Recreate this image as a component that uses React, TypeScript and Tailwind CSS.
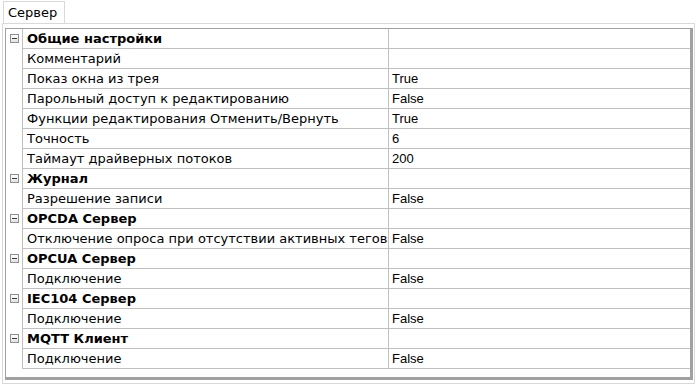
import React from 'react';

type Row = { name: string; value?: string; group?: boolean };

const rows: Row[] = [
  { name: 'Общие настройки', group: true },
  { name: 'Комментарий', value: '' },
  { name: 'Показ окна из трея', value: 'True' },
  { name: 'Парольный доступ к редактированию', value: 'False' },
  { name: 'Функции редактирования Отменить/Вернуть', value: 'True' },
  { name: 'Точность', value: '6' },
  { name: 'Таймаут драйверных потоков', value: '200' },
  { name: 'Журнал', group: true },
  { name: 'Разрешение записи', value: 'False' },
  { name: 'OPCDA Сервер', group: true },
  { name: 'Отключение опроса при отсутствии активных тегов', value: 'False' },
  { name: 'OPCUA Сервер', group: true },
  { name: 'Подключение', value: 'False' },
  { name: 'IEC104 Сервер', group: true },
  { name: 'Подключение', value: 'False' },
  { name: 'MQTT Клиент', group: true },
  { name: 'Подключение', value: 'False' },
];

const MinusBox = () => (
  <div className="mt-[5px] ml-[4px] w-[9px] h-[9px] border border-[#919191] bg-gradient-to-b from-white to-[#e2e2e2] flex items-center justify-center">
    <div className="w-[5px] h-px bg-[#3c3c3c]" />
  </div>
);

export default function App() {
  return (
    <div className="w-[696px] h-[385px] bg-white text-black overflow-hidden">
      {/* tabs */}
      <div className="h-[23px] flex items-end pl-[3px]">
        <div className="h-[22px] w-[62px] border border-b-0 border-[#d9d9d9] bg-white flex items-center pl-[4px] pt-[1px] text-[13px] font-['DejaVu_Sans',sans-serif]">
          Сервер
        </div>
      </div>
      {/* panel */}
      <div className="ml-[2px] w-[693px] h-[361px] border border-[#d9d9d9] pt-[4px] pl-[2px]">
        <div className="w-[688px] h-[352px] border-l border-t border-[#a0a0a0] border-r-[3px] border-b-[3px] border-r-[#a0a0a0] border-b-[#a0a0a0] bg-white">
          {rows.map((r, i) => (
            <div key={i} className="flex h-[20px]">
              <div className="w-[17px] shrink-0 border-r border-[#c0c0c0]">{r.group && <MinusBox />}</div>
              <div
                className={`w-[366px] shrink-0 border-r border-b border-[#c0c0c0] pl-[4px] pt-[1px] leading-[18px] text-[13px] font-['DejaVu_Sans',sans-serif] whitespace-nowrap overflow-hidden ${
                  r.group ? 'font-bold' : ''
                }`}
              >
                {r.name}
              </div>
              <div className="flex-1 border-b border-[#c0c0c0] pl-[3px] pt-[1px] leading-[18px] text-[13px] font-['Liberation_Sans',sans-serif]">
                {r.value}
              </div>
            </div>
          ))}
        </div>
      </div>
    </div>
  );
}
